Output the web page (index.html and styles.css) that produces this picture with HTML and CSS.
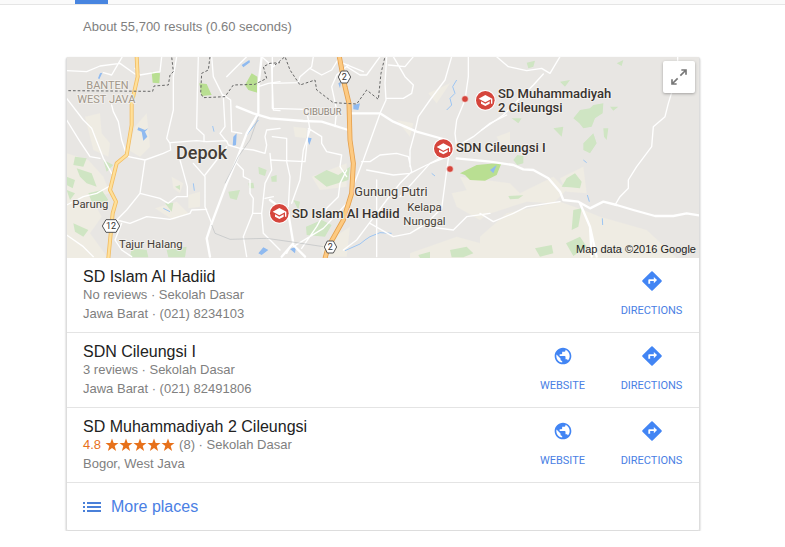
FILE: index.html
```
<!DOCTYPE html>
<html lang="en">
<head>
<meta charset="utf-8">
<title>Local results</title>
<link rel="stylesheet" href="styles.css">
</head>
<body>
<header class="topbar"><span class="tab-marker"></span></header>
<main class="content">
<p class="stats">About 55,700 results (0.60 seconds)</p>
<section class="card">
<div class="map">
<svg class="map-art" viewBox="21 21 1896 603" preserveAspectRatio="xMidYMid slice" role="img" aria-label="Map of places">
<defs>
<g id="pin">
<circle r="31" fill="#fff"/><circle r="28" fill="#d5453c"/>
<path fill="#fff" d="M-20-5 0-16 21-5V10H17V-3L0 6ZM-13 3 0 10 13 3V10L0 17-13 10Z"/>
</g>
<filter id="soft" x="-20%" y="-20%" width="140%" height="140%"><feGaussianBlur stdDeviation="1.5"/></filter>
</defs>
<rect x="0" y="0" width="1940" height="640" fill="#e8e6e3"/>
<g filter="url(#soft)">
<g fill="#efece3">
<path d="M20 310 85 330 130 380 150 430 95 445 125 500 90 550 145 625H20ZM75 200 120 190 125 250 150 280 145 320 100 300ZM225 230 260 190 270 290 240 320 205 300ZM285 475 350 455 385 490 340 510ZM385 435 420 425 420 470 385 475ZM335 380 370 400 360 430 340 415Z"/>
<path d="M700 230 740 235 740 265 705 260ZM755 380 860 340 860 410 780 420ZM780 590 870 530 860 620H790ZM1010 210 1060 220 1050 260ZM1105 130 1170 100 1130 160ZM1175 430 1270 410 1310 470 1260 510 1190 470ZM1050 610 1190 560 1300 590 1320 624H1050Z"/>
<path d="M1200 380 1350 400 1380 430 1480 380 1520 420 1480 460 1400 455 1260 500ZM1260 560 1340 490 1500 455 1570 480 1620 500 1760 540 1850 624H1260ZM1500 385 1570 350 1580 430 1520 425ZM1310 260 1350 245 1350 285 1320 280Z"/>
</g>
<g fill="#cfe5c3">
<path d="M45 320 80 325 70 350 40 345ZM50 355 95 370 110 410 80 400 60 380ZM20 380 45 390 38 415 20 405ZM85 430 125 420 145 450 120 465 95 455ZM20 420 45 430 30 450ZM40 520 85 540 70 560 45 545ZM215 595 260 600 265 622H210ZM320 600 380 590 375 622H325ZM130 330 160 345 140 365ZM505 425 540 420 530 450 510 445ZM595 350 620 360 615 378 597 372ZM565 400 580 398 583 415 568 415ZM635 455 655 460 648 470ZM315 460 340 458 335 485ZM345 410 360 405 360 420Z"/>
<path d="M762 380 800 360 835 375 870 350 865 390 800 410ZM738 530 785 510 815 525 795 560 740 555ZM700 450 720 455 715 480ZM633 380 650 375 650 395 635 395ZM1170 600 1220 590 1240 610 1210 622H1175ZM1075 615 1110 605 1110 624H1080Z"/>
<path d="M1505 410 1520 385 1545 370 1565 395 1560 415 1530 412ZM1360 330 1372 315 1390 318 1390 340 1372 345ZM1540 205 1560 180 1590 175 1600 165 1630 160 1628 190 1605 205 1595 230 1570 235 1558 220ZM1570 280 1600 250 1610 280 1590 310 1570 300ZM1540 480 1565 475 1555 530 1535 540ZM1518 580 1560 560 1580 590 1540 618ZM1400 38 1425 32 1420 50 1405 55ZM1355 205 1385 205 1375 220ZM1630 235 1645 235 1640 270 1632 260ZM1480 235 1510 230 1505 260ZM1425 595 1475 585 1480 610 1440 620ZM1500 95 1530 90 1515 110ZM1650 170 1675 170 1660 182ZM1345 438 1390 436 1375 446 1350 448ZM1670 40 1690 30 1685 48Z"/>
</g>
<g fill="#b9df92">
<path d="M275 65 300 70 298 100 278 98ZM418 100 440 102 455 135 425 138ZM555 105 575 70 592 80 592 128 565 120ZM1200 370 1250 345 1325 338 1310 375 1275 392 1230 390 1215 375Z"/>
</g>
<g fill="#8fbaf0">
<path d="M545 45 568 30 570 37 550 52ZM235 232 255 240 265 235 255 245 262 260 250 272 245 245 232 240ZM520 260 530 250 528 285 518 288ZM740 262 755 265 748 285ZM595 610 610 592 625 600 605 615ZM690 597 708 590 705 610ZM1290 360 1310 345 1300 370ZM835 100 843 95 840 115ZM880 165 900 160 895 180 880 178ZM120 70 127 68 118 88 114 85Z"/>
</g>
<g fill="none" stroke="#9cc5f3" stroke-width="3">
<path d="M560 255 595 210M400 400 403 422M458 228 462 245M310 475 330 485M855 602 900 582 915 570 930 560 960 548 995 550M1160 180 1175 165 1170 145 1185 130 1178 110 1190 90M1582 435 1588 455M1570 330 1580 338M1627 505 1628 525M1115 370 1125 378"/>
</g>
<g fill="none" stroke="#fff" stroke-width="4" stroke-linejoin="round" stroke-linecap="round">
<path d="M20 62 80 65 120 48 180 40 225 72M187 20 155 75 130 68M225 55 240 75 300 65 305 20M20 145 70 210 95 235 130 325 155 370M120 325 90 320 60 275 20 210M155 405 110 430 70 440 20 465M155 165 160 185 175 215 185 270 200 315M205 320 255 330 310 310 332 300 330 280 320 265 340 180 340 80 350 20M255 330 240 430 200 480 170 510 210 520 260 500 330 508 390 490 395 480 440 478M240 430 300 445 325 460 350 440 382 440 382 410 360 330M20 555 70 590 100 620M185 520 165 570 185 600 215 620M332 278 410 272 440 275 500 272 505 285 540 295"/>
<path d="M415 20 412 130 410 235 432 255 432 275M400 340 435 380 435 470 455 520M435 375 470 330 500 290M455 20 460 80 490 140 495 230 480 250 500 275M500 80 520 60 560 20M490 135 512 150 515 245 545 250M595 110 625 100 660 95M635 50 640 180 660 182M605 20 640 50 660 30M540 295 580 300 615 310 620 285 615 260 620 240 660 235M530 340 550 360 550 380 570 390 570 430 580 445 578 490 550 560 560 620M630 310 635 360 615 400 605 490 610 550 660 600M605 490 580 490M615 445 640 440"/>
<path d="M637 20 637 175 735 178M637 100 715 98 720 80 755 50 760 20M750 55 785 75 815 60 840 20M865 45 830 75 815 110 830 180 825 230M637 260 680 265 680 335 690 380 685 470M632 330 735 335 745 240M740 180 750 240 730 300 720 390 695 460M745 235 785 260 785 280 800 305 845 315 840 350 860 380M860 360 840 400 835 440 800 475 770 530 725 595M980 20 975 100 978 150 962 185 910 330 860 460 790 535 700 590M910 65 850 40M860 50 900 75 920 75 960 20M985 45 1035 50 1060 20M1000 20 1035 80 1060 105 1055 130 1030 145 980 145M905 335 930 335 960 315 1010 310 1045 320 1055 365 1020 400 980 450 920 530 890 570 850 600M1175 20 1155 90 1110 150 1075 200 1065 245 1050 300 1050 350M1050 370 1100 345 1150 325M1050 370 1000 375 920 360M1190 290 1185 250 1190 210 1215 150 1225 80 1225 20M1165 325 1145 475 1100 520 1050 550 1000 560 930 520M1100 530 1180 540 1220 500 1290 490M1190 290 1240 260 1290 220 1340 195"/>
<path d="M1310 20 1345 50 1400 62 1445 55 1470 70 1500 20M1450 72 1420 105 1330 195 1265 240M1260 490 1300 515 1360 490 1400 470 1500 455M1850 80 1825 160 1815 200 1780 230 1775 290 1730 350 1705 390 1705 415 1680 440 1665 465M1853 20 1853 60M950 390 950 620M690 590 680 610M1150 320 1110 340 1020 440"/>
</g>
<g fill="none" stroke="#fff" stroke-width="7" stroke-linejoin="round" stroke-linecap="round">
<path d="M605 20 595 110 595 190 560 250 530 330 500 400 455 520 440 565 450 620M530 170 580 190 630 205 730 213 785 215 865 240M870 190 960 190 1000 215 1070 245 1160 270M1190 325 1290 335 1360 345 1390 358 1420 360 1465 385 1500 425 1510 450 1555 455 1590 475 1630 455 1670 465 1720 480 1785 498 1840 498 1880 490 1917 496M1560 460 1590 530 1610 620M1590 530 1595 620M630 450 685 490 700 580 665 620M700 585 735 620"/>
</g>
<g fill="none" stroke="#bdbfc1" stroke-width="2"><path d="M595 200 570 270 535 320 495 400M455 525 465 550 510 568 620 565 690 575 790 590"/></g>
<g fill="none" stroke-linejoin="round">
<path stroke="#f2bd63" stroke-width="12" d="M230 20 233 80 215 160 215 225 200 315 170 340 150 420 168 455 158 490 145 625"/>
<path stroke="#ffe09a" stroke-width="7" d="M230 20 233 80 215 160 215 225 200 315 170 340 150 420 168 455 158 490 145 625"/>
<path stroke="#e5a04d" stroke-width="15" d="M838 20 855 110 867 160 870 270 880 340 875 430 850 510 805 590 795 625"/>
<path stroke="#fdca82" stroke-width="10" d="M838 20 855 110 867 160 870 270 880 340 875 430 850 510 805 590 795 625"/>
</g>
</g>
<g fill="none" stroke="#666" stroke-width="3" stroke-dasharray="8 6">
<path d="M25 122 278 124 282 108 325 105 330 75 340 65 335 20M450 20 445 60 425 70 422 130 430 143 495 140 520 105 585 103 620 85 610 50 630 40 660 38M645 45 675 20 690 60 720 105 765 90 770 120 820 158 890 162 920 120 955 148 963 70 975 20"/>
</g>
<g class="labels">
<text class="region" x="79" y="116">BANTEN</text><text class="region" x="52" y="159">WEST JAVA</text>
<text class="district" x="730" y="194">CIBUBUR</text>
<text class="city" x="348" y="328">Depok</text>
<text class="town" x="37" y="474">Parung</text><text class="town" x="177" y="594">Tajur Halang</text>
<text class="area" x="883" y="439">Gunung Putri</text>
<text class="town" x="1042" y="484">Kelapa</text><text class="town" x="1030" y="524">Nunggal</text>
<text class="place" x="696" y="504">SD Islam Al Hadiid</text>
<text class="place" x="1188" y="307">SDN Cileungsi I</text>
<text class="place" x="1314" y="145">SD Muhammadiyah</text><text class="place" x="1314" y="187">2 Cileungsi</text>
</g>
<g fill="#fff" stroke="#555" stroke-width="3">
<path d="M127 528 138 509H168L179 528 168 547H138ZM835 81 844 63H862L872 81 862 99H844ZM793 591 802 573H820L830 591 820 609H802Z"/>
</g>
<g class="shield"><text x="153" y="538">12</text><text x="853" y="91">2</text><text x="811" y="601">2</text></g>
<use href="#pin" x="658" y="490"/><use href="#pin" x="1150" y="296"/><use href="#pin" x="1276" y="151"/>
<g fill="#d5453c" stroke="#f6e5e2" stroke-width="2"><circle cx="1215" cy="147" r="10"/><circle cx="1170" cy="357" r="10"/></g>
</svg>
<button class="expand" type="button" aria-label="Expand map">
<svg viewBox="0 0 54 54" width="18" height="18" fill="none" stroke="#777" stroke-width="5"><path d="M31 23 48 6M34 6H48V20M23 31 6 48M6 34V48H20"/></svg>
</button>
<span class="credit">Map data ©2016 Google</span>
</div>

<svg class="symbols" aria-hidden="true">
<symbol id="directions" viewBox="0 0 24 24"><path fill="#4285f4" d="M22.400 11.300 12.700 1.600a1 1 0 0 0-1.400 0L1.600 11.300a1 1 0 0 0 0 1.400l9.700 9.700a1 1 0 0 0 1.400 0l9.700-9.700a1 1 0 0 0 0-1.400ZM14 14.500V12H10v3H8v-4a1 1 0 0 1 1-1h5V7.500l3.500 3.500Z"/></symbol>
<symbol id="globe" viewBox="0 0 24 24"><path fill="#4285f4" d="M12 2C6.480 2 2 6.480 2 12s4.480 10 10 10 10-4.480 10-10S17.520 2 12 2zm-1 17.930c-3.950-.490-7-3.850-7-7.930 0-.620.080-1.210.210-1.790L9 15v1c0 1.100.900 2 2 2v1.930zm6.900-2.540c-.260-.810-1-1.390-1.900-1.390h-1v-3c0-.550-.450-1-1-1H8v-2h2c.550 0 1-.450 1-1V7h2c1.100 0 2-.900 2-2v-.410c2.930 1.190 5 4.060 5 7.410 0 2.080-.800 3.970-2.100 5.390z"/></symbol>
<symbol id="star" viewBox="0 0 14 14"><path fill="#e7711b" d="M7 .5 8.700 5.100H13.500L9.700 8 11.100 13 7 10 2.900 13 4.300 8 .5 5.100H5.300Z"/></symbol>
</svg>

<article class="place-row">
<div class="info"><h3>SD Islam Al Hadiid</h3><p class="meta">No reviews · Sekolah Dasar</p><p class="address">Jawa Barat · (021) 8234103</p></div>
<a class="action" href="#"><svg class="icon"><use href="#directions"/></svg>DIRECTIONS</a>
</article>
<article class="place-row">
<div class="info"><h3>SDN Cileungsi I</h3><p class="meta">3 reviews · Sekolah Dasar</p><p class="address">Jawa Barat · (021) 82491806</p></div>
<a class="action" href="#"><svg class="icon globe"><use href="#globe"/></svg>WEBSITE</a>
<a class="action" href="#"><svg class="icon"><use href="#directions"/></svg>DIRECTIONS</a>
</article>
<article class="place-row">
<div class="info"><h3>SD Muhammadiyah 2 Cileungsi</h3><p class="meta"><span class="score">4.8</span><span class="stars"><svg><use href="#star"/></svg><svg><use href="#star"/></svg><svg><use href="#star"/></svg><svg><use href="#star"/></svg><svg><use href="#star"/></svg></span>(8) · Sekolah Dasar</p><p class="address">Bogor, West Java</p></div>
<a class="action" href="#"><svg class="icon globe"><use href="#globe"/></svg>WEBSITE</a>
<a class="action" href="#"><svg class="icon"><use href="#directions"/></svg>DIRECTIONS</a>
</article>
<a class="more" href="#"><svg viewBox="0 0 18 12" width="18" height="12" fill="#4a80d9"><path d="M0 1h2v2H0ZM4 1h14v2H4ZM0 5h2v2H0ZM4 5h14v2H4ZM0 9h2v2H0ZM4 9h14v2H4Z"/></svg>More places</a>
</section>
</main>
</body>
</html>
```
FILE: styles.css
```
* { box-sizing: border-box; }
body { margin: 0; background: #fff; color: #808080; font: 13px/18px "Liberation Sans", Arial, sans-serif; }
h3, p { margin: 0; }
a { color: #4a80e4; text-decoration: none; }
.topbar { height: 5px; padding-left: 75px; background: #fafafa; border-bottom: 1px solid #e5e5e5; }
.tab-marker { display: block; width: 33px; height: 4px; background: #4885e0; }
.content { max-width: 700px; padding-left: 66px; }
.stats { padding: 13px 17px 20px; }
.card { border: 1px solid #ddd; border-top: 0; border-radius: 2px; box-shadow: 0 1px 2px rgba(0, 0, 0, .3); }
.map { position: relative; margin-top: 1px; overflow: hidden; }
.map-art { display: block; width: 100%; height: 201px; }
.labels text { font-family: Roboto, sans-serif; fill: #443d36; stroke: #f2f0ed; stroke-width: 6px; stroke-linejoin: round; paint-order: stroke; }
.labels .place { font-size: 39px; font-weight: 500; fill: #38332f; }
.labels .town { font-size: 34px; }
.labels .area { font-size: 38px; }
.labels .city { font-size: 54px; font-weight: 500; }
.labels .region { font-size: 33px; fill: #a1978a; }
.labels .district { font-size: 28px; fill: #8e867b; }
.shield { font: 27px Roboto, sans-serif; fill: #333; text-anchor: middle; }
.expand { position: absolute; top: 4px; right: 4px; display: grid; place-items: center; width: 32px; height: 32px; padding: 0; border: 0; border-radius: 2px; background: #fff; box-shadow: 0 1px 3px rgba(0, 0, 0, .3); }
.credit { position: absolute; right: 3px; bottom: 2px; color: #222; font-size: 11px; line-height: 14px; }
.symbols { display: none; }
.place-row { display: flex; padding: 9px 3px 7px 16px; border-bottom: 1px solid #e4e4e4; }
.info { flex: 1; min-width: 0; }
.info h3 { color: #222; font-size: 16px; font-weight: 400; line-height: 20px; }
.meta { display: flex; align-items: center; line-height: 16px; }
.address { line-height: 22px; }
.score { color: #e7711b; }
.stars { display: flex; padding: 0 4px; }
.stars svg { width: 14px; height: 14px; }
.action { display: flex; flex-direction: column; align-items: center; gap: 11px; width: 89px; padding-top: 3px; font: 11px/16px Roboto, sans-serif; }
.icon { width: 22px; height: 22px; }
.globe { padding: 1px; }
.more { display: flex; align-items: center; gap: 10px; height: 47px; padding-left: 16px; font-size: 16px; }
```
